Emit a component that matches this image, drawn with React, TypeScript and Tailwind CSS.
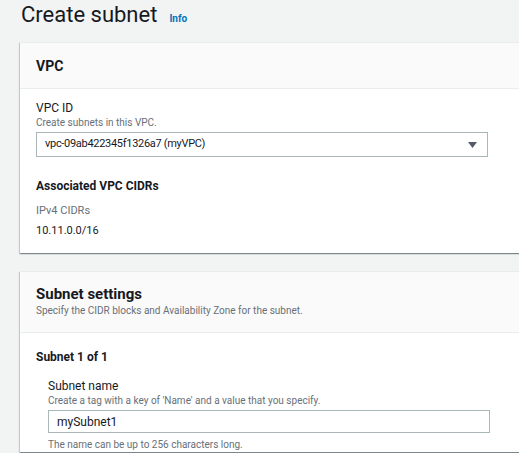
const cardShadow =
  "shadow-[0_1px_1px_0_rgba(0,28,36,0.3),1px_1px_1px_0_rgba(0,28,36,0.15),-1px_1px_1px_0_rgba(0,28,36,0.15)]"

export default function App() {
  return (
    <div className="h-[453px] w-[519px] overflow-hidden bg-[#f2f3f3] font-['Roboto',sans-serif] text-[#16191f]">
      <div className="flex items-baseline gap-[12px] pl-[21px]">
        <h1 className="text-[22px] leading-[30px] font-normal">Create subnet</h1>
        <span className="text-[10px] font-bold text-[#0073bb]">Info</span>
      </div>

      {/* VPC */}
      <div className={`ml-[20px] mt-[12px] w-[540px] border-t border-[#eaeded] bg-white ${cardShadow}`}>
        <div className="border-b border-[#eaeded] bg-[#fafafa] px-[16px] pt-[13px] pb-[12px]">
          <h2 className="text-[14px] leading-[20px] font-bold">VPC</h2>
        </div>
        <div className="px-[16px] pt-[12px] pb-[14px]">
          <div className="text-[12px] leading-[15px]">VPC ID</div>
          <div className="text-[10px] leading-[14px] text-[#687078]">Create subnets in this VPC.</div>
          <div className="mt-[2px] flex h-[25px] w-[452px] items-center justify-between border border-[#aab7b8] pl-[8px] pr-[10px]">
            <span className="text-[11px] tracking-[-0.3px]">vpc-09ab422345f1326a7 (myVPC)</span>
            <svg width="9" height="6" viewBox="0 0 9 6" aria-hidden="true">
              <path d="M0 0h9L4.5 6z" fill="#545b64" />
            </svg>
          </div>
          <h3 className="mt-[21px] text-[12px] leading-[16px] font-bold">Associated VPC CIDRs</h3>
          <div className="mt-[9px] text-[11px] leading-[16px] text-[#687078]">IPv4 CIDRs</div>
          <div className="mt-[4px] text-[11px] leading-[16px]">10.11.0.0/16</div>
        </div>
      </div>

      {/* Subnet settings */}
      <div className={`ml-[20px] mt-[18px] w-[540px] border-t border-[#eaeded] bg-white ${cardShadow}`}>
        <div className="border-b border-[#eaeded] bg-[#fafafa] px-[16px] pt-[12px] pb-[14px]">
          <h2 className="text-[15px] leading-[20px] font-bold">Subnet settings</h2>
          <div className="text-[10px] leading-[14px] text-[#687078]">
            Specify the CIDR blocks and Availability Zone for the subnet.
          </div>
        </div>
        <div className="px-[16px] pt-[16px]">
          <h3 className="text-[12px] leading-[16px] font-bold">Subnet 1 of 1</h3>
          <div className="mt-[14px] pl-[12px]">
            <div className="text-[12px] leading-[15px]">Subnet name</div>
            <div className="text-[10px] leading-[14px] text-[#687078]">
              Create a tag with a key of 'Name' and a value that you specify.
            </div>
            <div className="mt-[2px] flex h-[23px] w-[442px] items-center border border-[#aab7b8] pl-[8px] text-[12px]">
              mySubnet1
            </div>
            <div className="mt-[5px] text-[10px] leading-[14px] text-[#687078]">
              The name can be up to 256 characters long.
            </div>
          </div>
        </div>
      </div>
    </div>
  )
}
